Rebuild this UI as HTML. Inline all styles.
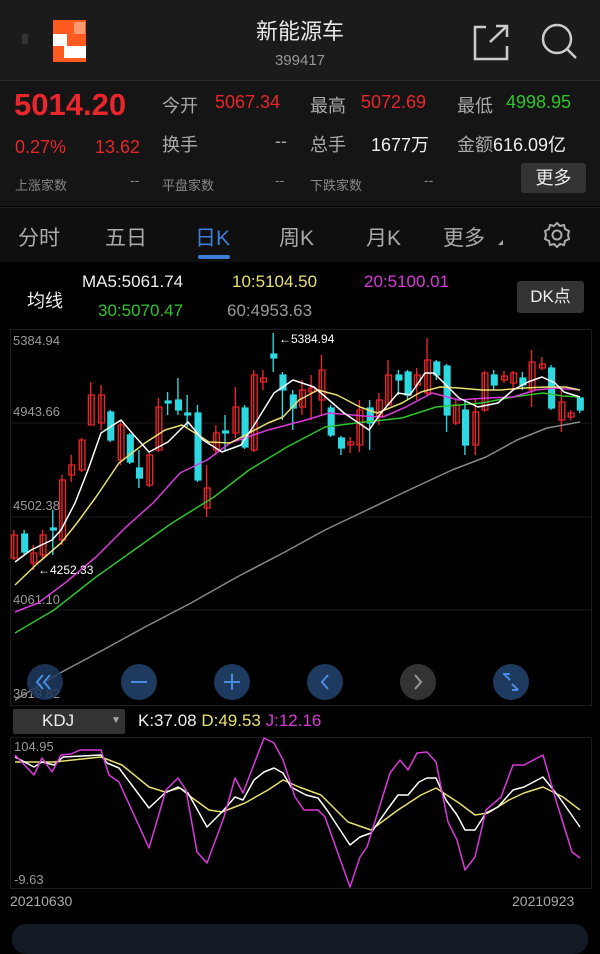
<!DOCTYPE html>
<html><head><meta charset="utf-8"><style>
*{margin:0;padding:0;box-sizing:border-box}
body{width:600px;height:936px;background:#000;font-family:"Liberation Sans","Noto Sans CJK SC",sans-serif;position:relative;overflow:hidden;color:#ddd}
.a{position:absolute;white-space:nowrap}
</style></head><body>
<div class="a" style="left:0;top:0;width:600px;height:80px;background:#1b1b1b"></div>
<div class="a" style="left:0;top:80px;width:600px;height:126px;background:#151515;border-top:1px solid #2a2a2a"></div>
<div class="a" style="left:0;top:207px;width:600px;height:55px;background:#0f0f0f;border-top:1px solid #222"></div>
<!-- logo -->
<div class="a" style="left:53px;top:20px;width:33px;height:42px;background:#ff5a1f"></div>
<div class="a" style="left:53px;top:34px;width:14px;height:12px;background:#fff"></div>
<div class="a" style="left:64px;top:46px;width:22px;height:12px;background:#fff"></div>
<div class="a" style="left:74px;top:22px;width:11px;height:12px;background:#ff9b70"></div>
<div class="a" style="left:22px;top:34px;width:6px;height:10px;background:#333"></div>
<div class="a" style="left:0;top:14px;width:600px;text-align:center;font-size:22px;color:#e8e8e8">新能源车</div>
<div class="a" style="left:0;top:52px;width:600px;text-align:center;font-size:15px;color:#999">399417</div>
<svg class="a" style="left:470px;top:22px" width="40" height="40" viewBox="0 0 40 40" fill="none" stroke="#ccc" stroke-width="2.5"><path d="M16 5H5v32h32V24"/><path d="M20 20L37 4M26 4h11v11"/></svg>
<svg class="a" style="left:540px;top:22px" width="40" height="40" viewBox="0 0 40 40" fill="none" stroke="#ccc" stroke-width="2.5"><circle cx="17" cy="17" r="14"/><path d="M27 27l9 9"/></svg>
<!-- quote -->
<div class="a" style="left:14px;top:87px;font-size:31px;font-weight:bold;color:#e8262b">5014.20</div>
<div class="a" style="left:162px;top:92px;font-size:18px;color:#aaa">今开</div>
<div class="a" style="left:215px;top:92px;font-size:18px;color:#e8262b">5067.34</div>
<div class="a" style="left:310px;top:92px;font-size:18px;color:#aaa">最高</div>
<div class="a" style="left:361px;top:92px;font-size:18px;color:#e8262b">5072.69</div>
<div class="a" style="left:457px;top:92px;font-size:18px;color:#aaa">最低</div>
<div class="a" style="left:506px;top:92px;font-size:18px;color:#2ec42e">4998.95</div>
<div class="a" style="left:15px;top:137px;font-size:18px;color:#e8262b">0.27%</div>
<div class="a" style="left:95px;top:137px;font-size:18px;color:#e8262b">13.62</div>
<div class="a" style="left:162px;top:131px;font-size:18px;color:#aaa">换手</div>
<div class="a" style="left:275px;top:131px;font-size:18px;color:#aaa">--</div>
<div class="a" style="left:310px;top:131px;font-size:18px;color:#aaa">总手</div>
<div class="a" style="left:371px;top:131px;font-size:18px;color:#eee">1677万</div>
<div class="a" style="left:457px;top:131px;font-size:18px;color:#aaa">金额<span style="color:#eee">616.09亿</span></div>
<div class="a" style="left:15px;top:175px;font-size:13px;color:#888">上涨家数</div>
<div class="a" style="left:130px;top:172px;font-size:14px;color:#888">--</div>
<div class="a" style="left:162px;top:175px;font-size:13px;color:#888">平盘家数</div>
<div class="a" style="left:275px;top:172px;font-size:14px;color:#888">--</div>
<div class="a" style="left:310px;top:175px;font-size:13px;color:#888">下跌家数</div>
<div class="a" style="left:424px;top:172px;font-size:14px;color:#888">--</div>
<div class="a" style="left:521px;top:163px;width:65px;height:30px;background:#333;border-radius:3px;text-align:center;line-height:30px;font-size:18px;color:#eee">更多</div>
<!-- tabs -->
<div class="a" style="left:18px;top:222px;font-size:21px;color:#aaa">分时</div>
<div class="a" style="left:105px;top:222px;font-size:21px;color:#aaa">五日</div>
<div class="a" style="left:195px;top:222px;font-size:21px;color:#3d7fd6">日K</div>
<div class="a" style="left:279px;top:222px;font-size:21px;color:#aaa">周K</div>
<div class="a" style="left:366px;top:222px;font-size:21px;color:#aaa">月K</div>
<div class="a" style="left:443px;top:222px;font-size:21px;color:#aaa">更多</div>
<div class="a" style="left:498px;top:240px;width:0;height:0;border-left:5px solid transparent;border-bottom:5px solid #aaa"></div>
<svg class="a" style="left:543px;top:221px" width="28" height="28" viewBox="0 0 28 28" fill="none" stroke="#aaa" stroke-width="2"><path d="M14 2l3 3 4-1 1 4 4 2-1 4 1 4-4 2-1 4-4-1-3 3-3-3-4 1-1-4-4-2 1-4-1-4 4-2 1-4 4 1z"/><circle cx="14" cy="14" r="4.5"/></svg>
<div class="a" style="left:198px;top:255px;width:32px;height:4px;border-radius:2px;background:#3d7fd6"></div>
<!-- MA legend -->
<div class="a" style="left:27px;top:287px;font-size:18px;color:#eee">均线</div>
<div class="a" style="left:82px;top:272px;font-size:17px;color:#eee">MA5:5061.74</div>
<div class="a" style="left:232px;top:272px;font-size:17px;color:#e8e070">10:5104.50</div>
<div class="a" style="left:364px;top:272px;font-size:17px;color:#d93ad9">20:5100.01</div>
<div class="a" style="left:98px;top:301px;font-size:17px;color:#2ec42e">30:5070.47</div>
<div class="a" style="left:227px;top:301px;font-size:17px;color:#999">60:4953.63</div>
<div class="a" style="left:517px;top:281px;width:67px;height:32px;background:#333;border-radius:3px;text-align:center;line-height:32px;font-size:17px;color:#eee">DK点</div>
<svg class="a" style="left:0;top:0" width="600" height="936">
<g stroke="#1c1c1c" stroke-width="1" fill="none">
<rect x="10.5" y="329.5" width="581" height="376"/>
<path d="M10 423H592M10 517H592M10 610H592"/>
<rect x="10.5" y="737.5" width="581" height="151"/>
</g>
<g font-size="13" fill="#999" font-family="Liberation Sans,sans-serif">
<text x="13" y="345">5384.94</text><text x="13" y="416">4943.66</text><text x="13" y="510">4502.38</text><text x="13" y="604">4061.10</text><text x="13" y="698">3619.82</text>
<text x="14" y="751">104.95</text><text x="14" y="884">-9.63</text>
</g>
<g font-size="14" fill="#aaa" font-family="Liberation Sans,sans-serif"><text x="10" y="906">20210630</text><text x="512" y="906">20210923</text></g>
<g transform="scale(1.148,1)" stroke-width="1.2">
<g stroke="#e8262b" fill="none">
<path d="M12 530V560M29 545V570M37 530V560M54 475V545M62 455V482M71 438V472M79 382V425M88 385V430M105 420V465M130 453V487M138 398V452M180 465V517M188 425V455M205 387V438M221 370V452M229 370V390M263 380V415M271 375V420M280 355V415M305 437V453M313 400V452M330 393V425M338 360V405M363 368V400M372 338V395M397 400V425M414 398V455M422 371V412M439 371V383M447 371V390M463 350V407M472 357V370M489 390V432M497 410V420"/>
<rect x="10" y="535" width="5" height="23"/><rect x="27" y="553" width="5" height="10"/><rect x="35" y="535" width="5" height="20"/><rect x="52" y="480" width="5" height="60"/><rect x="60" y="465" width="5" height="10"/><rect x="69" y="440" width="5" height="30"/><rect x="77" y="395" width="5" height="30"/><rect x="86" y="395" width="5" height="28"/><rect x="103" y="425" width="5" height="35"/><rect x="128" y="455" width="5" height="30"/><rect x="136" y="407" width="5" height="43"/><rect x="178" y="488" width="5" height="20"/><rect x="186" y="433" width="5" height="17"/><rect x="203" y="407" width="5" height="26"/><rect x="219" y="375" width="5" height="75"/><rect x="227" y="378" width="5" height="4"/><rect x="261" y="390" width="5" height="17"/><rect x="269" y="388" width="5" height="4"/><rect x="278" y="370" width="5" height="30"/><rect x="303" y="442" width="5" height="3"/><rect x="311" y="410" width="5" height="35"/><rect x="328" y="400" width="5" height="16"/><rect x="336" y="375" width="5" height="30"/><rect x="361" y="375" width="5" height="10"/><rect x="370" y="360" width="5" height="33"/><rect x="395" y="405" width="5" height="18"/><rect x="412" y="412" width="5" height="33"/><rect x="420" y="373" width="5" height="37"/><rect x="437" y="376" width="5" height="4"/><rect x="445" y="373" width="5" height="10"/><rect x="461" y="362" width="5" height="28"/><rect x="470" y="364" width="5" height="4"/><rect x="487" y="402" width="5" height="18"/><rect x="495" y="413" width="5" height="4"/>
</g>
<g stroke="#2ed8e0" fill="#2ed8e0">
<path d="M21 530V555M46 510V555M96 410V442M113 433V464M121 450V488M146 392V415M155 378V415M163 395V427M172 405V482M196 415V450M213 405V449M238 333V372M246 372V420M255 390V430M288 405V437M297 436V455M322 400V450M347 370V395M355 370V400M380 360V380M389 364V432M405 400V455M430 370V390M455 372V390M480 365V410M505 400V413"/>
<rect x="19" y="534" width="5" height="18"/><rect x="44" y="528" width="5" height="2"/><rect x="94" y="412" width="5" height="28"/><rect x="111" y="435" width="5" height="27"/><rect x="119" y="468" width="5" height="10"/><rect x="144" y="401" width="5" height="2"/><rect x="153" y="400" width="5" height="10"/><rect x="161" y="413" width="5" height="2"/><rect x="170" y="413" width="5" height="67"/><rect x="194" y="431" width="5" height="2"/><rect x="211" y="408" width="5" height="39"/><rect x="236" y="354" width="5" height="4"/><rect x="244" y="375" width="5" height="15"/><rect x="253" y="395" width="5" height="13"/><rect x="286" y="408" width="5" height="27"/><rect x="295" y="438" width="5" height="10"/><rect x="320" y="408" width="5" height="15"/><rect x="345" y="375" width="5" height="5"/><rect x="353" y="372" width="5" height="23"/><rect x="378" y="362" width="5" height="13"/><rect x="387" y="366" width="5" height="49"/><rect x="403" y="410" width="5" height="35"/><rect x="428" y="375" width="5" height="10"/><rect x="453" y="378" width="5" height="7"/><rect x="478" y="368" width="5" height="40"/><rect x="503" y="398" width="5" height="12"/>
</g></g>
<g fill="none" stroke-width="1.5" stroke-linejoin="round">
<polyline stroke="#888" points="15,700 60,673 103,650 145,627 191,603 237,577 283,553 325,530 367,510 409,490 452,470 486,457 517,440 547,428 580,422"/>
<polyline stroke="#2ec42e" points="15,633 54,610 96,577 134,550 172,523 214,497 249,470 287,447 325,427 364,422 402,418 436,407 459,405 482,403 513,397 543,393 563,396 580,397"/>
<polyline stroke="#d93ad9" points="15,612 38,603 65,583 96,557 126,527 153,503 180,473 207,460 230,443 268,430 306,420 329,413 364,416 383,417 406,407 432,393 459,400 486,398 513,397 536,390 555,388 580,390"/>
<polyline stroke="#e8e070" points="15,585 38,563 61,543 77,523 96,497 119,463 145,443 165,430 182,425 195,433 209,442 230,443 249,433 268,423 283,417 299,400 318,390 337,395 360,407 377,413 402,403 421,392 440,387 459,388 482,390 501,390 524,388 547,387 566,387 580,390"/>
<polyline stroke="#fff" points="15,562 31,550 52,540 61,530 75,503 88,470 101,433 121,420 132,433 149,452 168,442 188,422 203,440 222,452 241,445 253,427 274,393 293,380 314,387 329,400 344,413 369,430 381,413 398,393 410,395 425,373 434,373 444,383 459,398 478,407 498,403 513,390 528,382 542,377 555,383 564,392 580,397"/>
<polyline stroke="#e8e070" points="15,762 54,762 101,757 122,765 149,787 165,792 180,788 191,797 209,810 222,812 245,803 268,790 283,780 299,787 321,795 348,822 371,830 398,810 421,795 436,788 459,803 475,815 488,813 509,800 524,793 543,787 563,797 580,810"/>
<polyline stroke="#fff" points="15,757 34,767 42,762 54,765 63,757 101,755 107,763 119,768 149,808 165,793 178,787 188,793 207,827 222,812 235,797 243,800 254,780 264,772 274,768 283,773 291,787 306,795 318,798 327,810 350,845 360,837 371,833 387,810 398,795 408,795 419,782 427,778 436,778 446,800 457,815 465,830 475,830 486,813 498,807 513,790 524,787 543,777 559,797 580,827"/>
<polyline stroke="#d93ad9" points="15,755 34,775 42,758 52,772 61,755 71,754 80,750 101,750 109,775 119,782 149,848 166,790 178,778 186,790 197,852 207,863 224,817 235,778 243,793 264,738 274,743 283,760 295,797 304,810 318,810 325,817 350,887 360,857 367,847 390,773 400,760 408,770 417,753 427,752 436,762 448,822 457,840 465,870 475,857 486,810 501,797 513,765 524,765 543,755 555,797 572,852 580,858"/>
</g>
<g fill="#fff" font-size="12" font-family="Liberation Sans,sans-serif"><text x="279" y="343">←5384.94</text><text x="38" y="574">←4252.33</text></g>
<g>
<circle cx="45" cy="682" r="18" fill="#1f3a5f" opacity=".85"/><circle cx="139" cy="682" r="18" fill="#1f3a5f"/><circle cx="232" cy="682" r="18" fill="#1f3a5f"/><circle cx="325" cy="682" r="18" fill="#1f3a5f"/><circle cx="418" cy="682" r="18" fill="#333"/><circle cx="511" cy="682" r="18" fill="#1f3a5f"/>
<g fill="none" stroke="#4a8ce0" stroke-width="2"><path d="M43 675l-6 7 6 7M50 675l-6 7 6 7M131 682h16M232 674v16M224 682h16M328 675l-6 7 6 7M504 675v-1h6M504 674l6 6M518 690h-6M518 690l-6-6"/></g>
<path d="M415 675l6 7-6 7" fill="none" stroke="#999" stroke-width="2"/>
</g>
</svg>
<div class="a" style="left:13px;top:709px;width:112px;height:25px;background:#333;border-radius:2px"></div>
<div class="a" style="left:42px;top:711px;font-size:17px;color:#eee">KDJ</div>
<div class="a" style="left:111px;top:715px;font-size:10px;color:#aaa">▼</div>
<div class="a" style="left:138px;top:711px;font-size:17px;color:#eee">K:37.08 <span style="color:#e8e070">D:49.53</span> <span style="color:#d93ad9">J:12.16</span></div>
<div class="a" style="left:12px;top:924px;width:576px;height:30px;background:#141a24;border-radius:14px"></div>
</body></html>
